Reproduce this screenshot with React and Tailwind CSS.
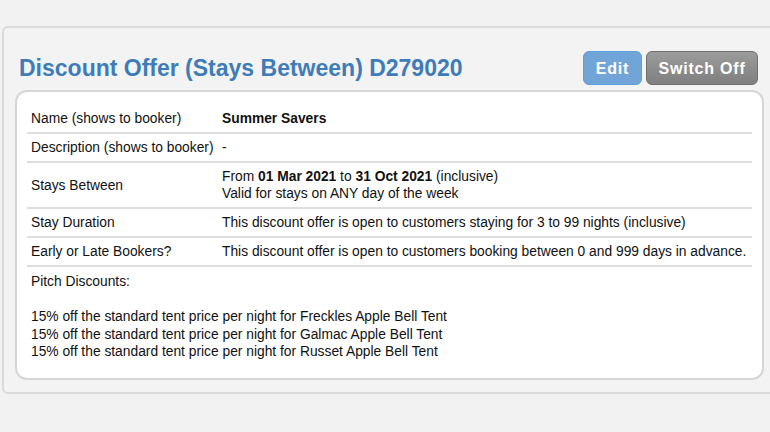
import React from 'react';

const rows = [
  { label: 'Name (shows to booker)', value: <b>Summer Savers</b> },
  { label: 'Description (shows to booker)', value: '-' },
  {
    label: 'Stays Between',
    value: (
      <>
        From <b>01 Mar 2021</b> to <b>31 Oct 2021</b> (inclusive)
        <br />
        Valid for stays on ANY day of the week
      </>
    ),
  },
  { label: 'Stay Duration', value: 'This discount offer is open to customers staying for 3 to 99 nights (inclusive)' },
  { label: 'Early or Late Bookers?', value: 'This discount offer is open to customers booking between 0 and 999 days in advance.' },
];

const tents = ['Freckles', 'Galmac', 'Russet'];

export default function App() {
  return (
    <div className="w-[770px] h-[432px] overflow-hidden bg-[#f2f2f2] pt-[26px] pl-[2px] font-['Liberation_Sans',Arial,sans-serif] text-[13.8px] leading-[17px] text-[#111]">
      <div className="w-[775px] bg-[#f3f3f3] border-2 border-[#dadada] rounded-[6px] px-[11px] pt-[23px] pb-[12px]">
        <div className="flex items-center justify-between pl-[4px] pr-[6px] mb-[5px]">
          <h1 className="text-[23px] leading-[28px] font-bold text-[#3d7cb9]">Discount Offer (Stays Between) D279020</h1>
          <div className="flex gap-[4px]">
            <button className="h-[34px] w-[59px] rounded-[6px] border border-[#5c9de4] bg-[#71a5d8] text-white font-bold text-[16px] tracking-[0.8px]">Edit</button>
            <button className="h-[34px] w-[112px] rounded-[6px] border border-[#6f6f6f] bg-gradient-to-b from-[#9c9c9c] to-[#7f7f7f] text-white font-bold text-[16px] tracking-[0.8px]">Switch Off</button>
          </div>
        </div>
        <div className="bg-white border-2 border-[#d6d6d6] rounded-[12px] px-[10px] pt-[13px] pb-[17px]">
          {rows.map((r) => (
            <div key={r.label} className="flex border-b-2 border-[#dedede] py-[5px]">
              <div className="w-[191px] pl-[4px] shrink-0 self-center">{r.label}</div>
              <div className="pl-[4px] whitespace-nowrap">{r.value}</div>
            </div>
          ))}
          <div className="pl-[4px] pt-[6px] leading-[17.5px]">
            Pitch Discounts:
            <br />
            <br />
            {tents.map((t) => (
              <div key={t}>15% off the standard tent price per night for {t} Apple Bell Tent</div>
            ))}
          </div>
        </div>
      </div>
    </div>
  );
}
